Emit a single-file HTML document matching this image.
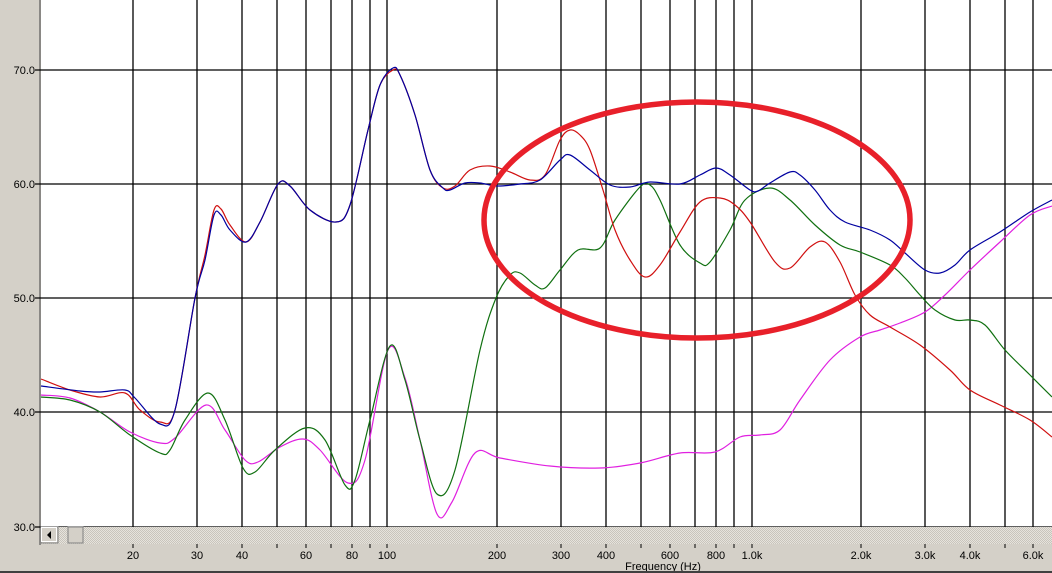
<!DOCTYPE html>
<html><head><meta charset="utf-8"><style>
body{margin:0;width:1052px;height:573px;overflow:hidden;background:#d4d0c8;font-family:"Liberation Sans",sans-serif;}
svg{position:absolute;left:0;top:0}
</style></head><body>
<svg width="1052" height="573" xmlns="http://www.w3.org/2000/svg">
<defs><pattern id="h" width="2" height="2" patternUnits="userSpaceOnUse"><rect width="2" height="2" fill="#e6e3dc"/><rect width="1" height="1" fill="#c8c4bc"/><rect x="1" y="1" width="1" height="1" fill="#c8c4bc"/></pattern></defs>
<rect x="0" y="0" width="1052" height="573" fill="#d4d0c8"/>
<rect x="41" y="0" width="1011" height="527" fill="#fff"/>
<rect x="39" y="0" width="2" height="545" fill="#8a8885"/>
<g id="grid" stroke="#000" stroke-width="1.3"></g>
<g font-size="11" fill="#000" text-anchor="end">
<text x="35" y="74">70.0</text><text x="35" y="188">60.0</text><text x="35" y="302">50.0</text><text x="35" y="416">40.0</text><text x="35" y="531">30.0</text>
</g>
<rect x="41" y="527" width="1011" height="17" fill="url(#h)"/>
<rect x="41" y="527" width="17" height="16" fill="#d4d0c8" stroke="#808080"/>
<rect x="41.5" y="527.5" width="15" height="14" fill="none" stroke="#fff"/>
<path d="M47 535 L51 531 L51 539 Z" fill="#000"/>
<rect x="68" y="527" width="15" height="16" fill="#d4d0c8" stroke="#808080"/>
<g id="ticks" stroke="#000"></g>
<g id="xl" font-size="11" fill="#000" text-anchor="middle"></g>
<text x="663" y="570" font-size="11" text-anchor="middle">Frequency (Hz)</text>
<rect x="0" y="571" width="1052" height="2" fill="#404040"/>
<g id="curves" fill="none" stroke-width="1.2"></g>
<ellipse cx="697" cy="220" rx="213" ry="118" fill="none" stroke="#e8202a" stroke-width="5.5"/>
</svg>
<script>
var NS="http://www.w3.org/2000/svg";
function el(p,t,a,txt){var e=document.createElementNS(NS,t);for(var k in a)e.setAttribute(k,a[k]);if(txt)e.textContent=txt;document.getElementById(p).appendChild(e);}
[133,197,242,277,306,331,352,370,387,497,561,606,641,670,695,716,734,752,861,925,970,1005,1033].forEach(function(x){el("grid","line",{x1:x,y1:0,x2:x,y2:527});el("ticks","line",{x1:x,y1:544,x2:x,y2:548});});
[70,184,298,412,527].forEach(function(y){el("grid","line",{x1:35,y1:y,x2:1052,y2:y});});
[[133,"20"],[197,"30"],[242,"40"],[306,"60"],[352,"80"],[387,"100"],[497,"200"],[561,"300"],[606,"400"],[670,"600"],[716,"800"],[752,"1.0k"],[861,"2.0k"],[925,"3.0k"],[970,"4.0k"],[1033,"6.0k"]].forEach(function(a){el("xl","text",{x:a[0],y:559},a[1]);});
function path(p){var d="M"+p[0][0]+" "+p[0][1];for(var i=0;i<p.length-1;i++){var p0=p[i-1]||p[i],p1=p[i],p2=p[i+1],p3=p[i+2]||p2;d+=" C"+(p1[0]+(p2[0]-p0[0])/6)+" "+(p1[1]+(p2[1]-p0[1])/6)+" "+(p2[0]-(p3[0]-p1[0])/6)+" "+(p2[1]-(p3[1]-p1[1])/6)+" "+p2[0]+" "+p2[1];}return d;}
var mag=[[41,395],[70,398],[100,412],[130,432],[160,443],[175,438],[206,405],[225,430],[245,460],[258,462],[280,447],[303,439],[320,450],[348,483],[365,460],[388,350],[405,378],[420,440],[437,514],[452,502],[475,453],[500,458],[550,466],[600,468],[640,463],[680,453],[715,452],[740,437],[760,435],[780,430],[800,400],[830,360],[860,337],[880,330],[900,323],[925,312],[945,295],[970,270],[1000,242],[1030,215],[1052,206]];
var grn=[[41,397],[70,400],[100,412],[130,435],[160,453],[170,450],[185,420],[208,393],[225,420],[243,468],[255,472],[275,450],[305,428],[325,440],[345,485],[355,480],[370,420],[390,346],[405,380],[420,440],[437,494],[455,470],[480,350],[496,298],[510,275],[520,273],[535,285],[545,288],[560,270],[578,250],[600,248],[615,220],[640,187],[650,185],[660,200],[680,245],[700,263],[710,262],[730,230],[745,200],[770,188],[790,200],[815,225],[840,245],[860,252],[890,265],[905,278],[920,295],[935,310],[955,320],[970,320],[985,325],[1005,350],[1030,375],[1052,397]];
var red=[[41,379],[70,390],[100,397],[125,393],[140,410],[160,422],[175,410],[195,298],[205,255],[214,210],[221,209],[230,225],[246,242],[260,222],[278,184],[290,186],[310,210],[336,222],[350,205],[368,130],[380,85],[393,70],[400,75],[415,115],[430,170],[443,188],[455,186],[470,170],[490,166],[510,172],[530,180],[545,175],[560,140],[570,130],[580,135],[590,150],[603,190],[615,230],[630,260],[645,277],[660,265],[680,232],[700,202],[720,198],[735,205],[750,222],[775,262],[790,268],[810,247],[825,242],[840,262],[855,295],[870,315],[890,327],[920,345],[950,370],[970,390],[1000,405],[1030,420],[1052,437]];
var blu=[[41,386],[80,391],[100,392],[125,390],[135,398],[160,424],[175,410],[195,298],[205,260],[214,215],[221,215],[230,230],[246,242],[260,222],[278,184],[290,186],[310,210],[336,222],[350,205],[368,130],[380,85],[393,68],[400,75],[415,115],[430,170],[443,188],[450,190],[465,183],[480,183],[497,186],[520,184],[540,180],[560,160],[570,155],[590,170],[610,185],[630,187],[650,182],[680,184],[700,175],[716,168],[730,175],[750,190],[758,191],[770,183],[790,172],[800,175],[815,190],[830,210],[845,222],[870,230],[890,240],[905,253],[925,270],[940,273],[955,265],[970,250],[1000,232],[1030,212],[1052,200]];
[[mag,"#e020e0"],[grn,"#107010"],[red,"#d01010"],[blu,"#0000a0"]].forEach(function(c){el("curves","path",{d:path(c[0]),stroke:c[1]});});
</script>
</body></html>
